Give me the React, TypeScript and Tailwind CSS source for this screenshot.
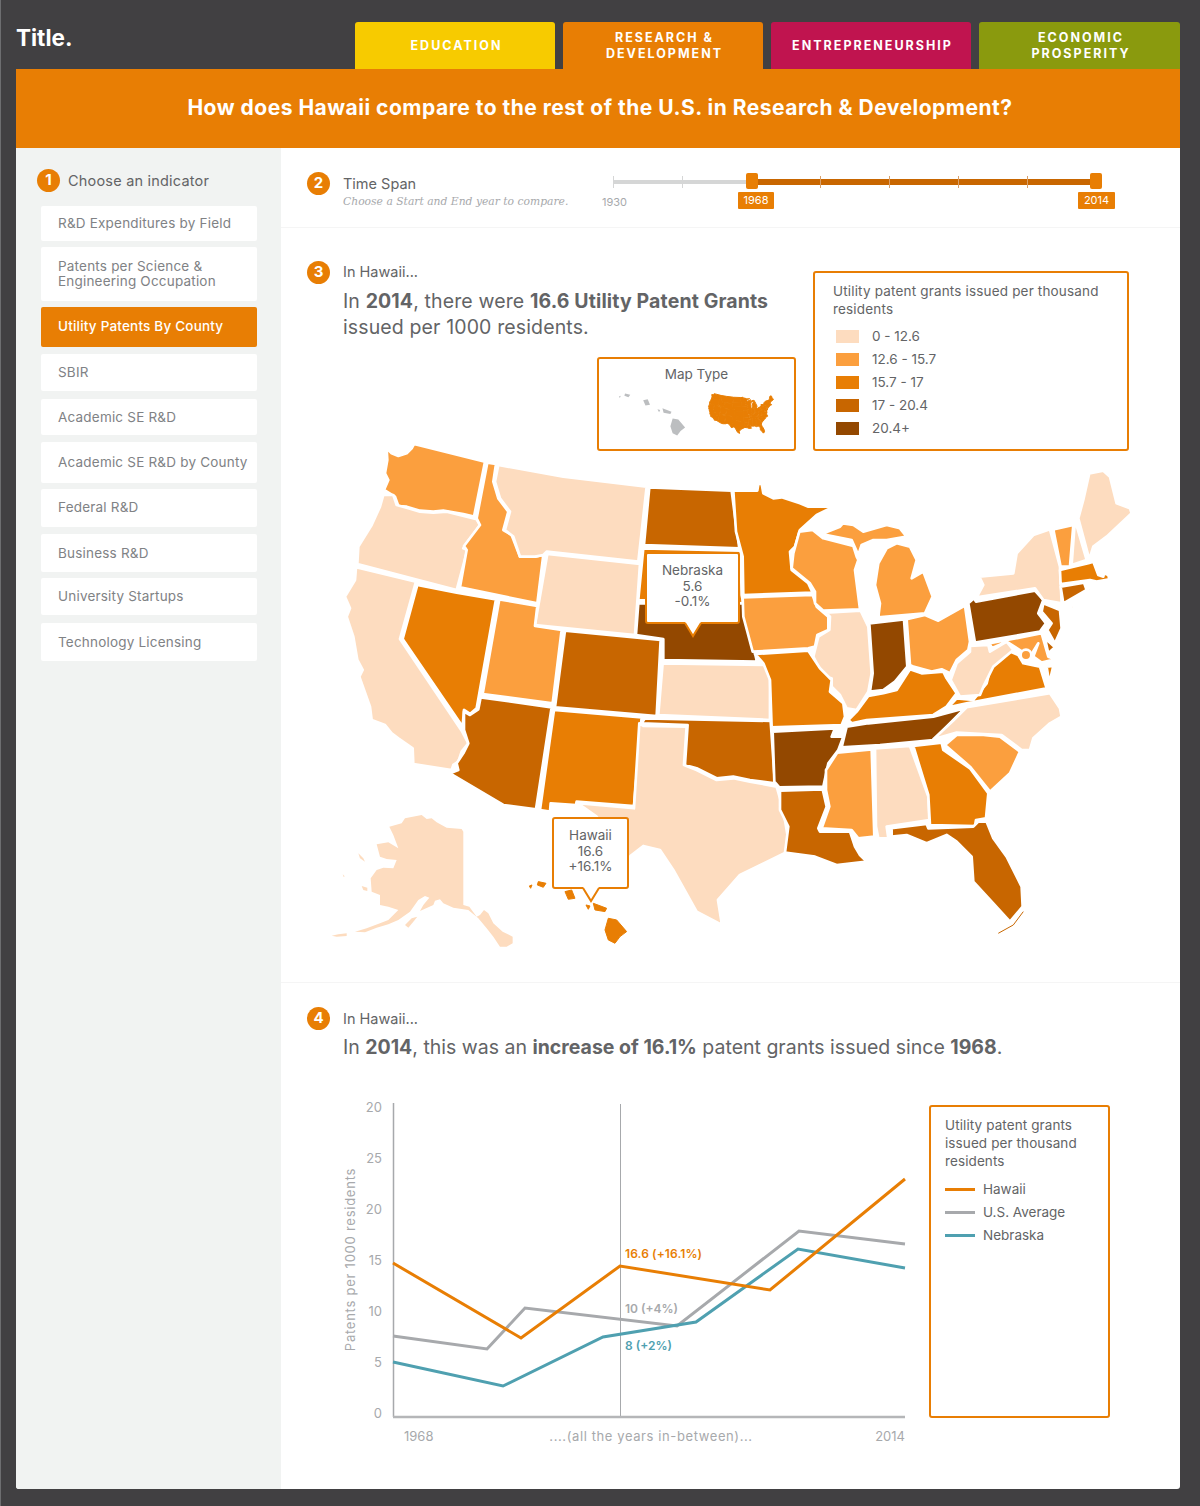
const LIGHT = "#fddcbf";
const MID = "#fb9f3e";
const ORANGE = "#e87e04";
const DARK = "#c86600";
const BROWN = "#934800";

// traced state outlines, west and east halves use their own local coords
const westStates: [string, string][] = [
  [MID, "170,25 185,40 205,48 230,40 245,25 252,12 465,65 432,230 400,222 340,212 310,215 270,212 230,200 205,198 195,170 162,150 175,120 165,100 172,60"],
  [LIGHT, "160,165 190,165 200,195 235,205 270,215 310,218 350,215 440,238 450,255 410,310 400,325 412,330 380,450 265,420 82,372 85,320 125,255 150,200"],
  [MID, "472,68 498,72 490,125 505,175 535,215 520,270 545,285 570,350 615,350 640,345 622,490 390,442 410,330 402,318 450,255 440,235"],
  [LIGHT, "505,75 700,110 950,140 925,365 650,335 640,345 615,350 570,350 550,290 525,270 540,215 510,175 495,125"],
  [DARK, "958,142 1205,152 1215,230 1228,325 942,315"],
  [ORANGE, "940,325 1232,332 1235,465 1240,490 925,480"],
  [BROWN, "925,490 1240,490 1281,665 1000,660 1000,597 918,585"],
  [LIGHT, "652,342 930,372 915,585 615,555"],
  [MID, "508,478 622,498 615,558 695,570 668,790 458,762"],
  [DARK, "705,572 992,600 980,828 675,802"],
  [ORANGE, "262,435 380,458 498,478 448,760 440,805 420,822 402,810 398,860 218,597"],
  [LIGHT, "78,382 258,425 210,597 395,872 415,910 395,935 385,965 370,975 365,990 250,972 248,925 205,895 185,880 165,855 125,840 120,800 88,710 98,690 82,660 70,590 50,530 60,505 45,470 75,420"],
  [DARK, "452,772 665,802 618,1108 520,1095 360,1000 385,990 380,970 400,940 415,910 402,870 402,815 420,825 445,808"],
  [ORANGE, "672,810 935,832 912,1098 740,1085 738,1095 662,1090 660,1115 630,1110"],
  [LIGHT, "998,670 1310,675 1320,690 1320,840 985,825"],
  [DARK, "945,835 1322,843 1335,1030 1260,1020 1210,1010 1160,1015 1100,985 1065,975 1073,855 935,850"],
  [LIGHT, "940,858 1070,860 1062,975 1100,990 1160,1020 1210,1015 1260,1025 1340,1040 1360,1110 1375,1200 1365,1239 1230,1305 1164,1380 1176,1455 1100,1415 1030,1290 990,1230 940,1218 905,1245 890,1260 840,1190 800,1130 750,1095 745,1090 912,1105 928,850"],
];

const eastStates: [string, string][] = [
  [ORANGE, "-20,92 52,92 55,72 65,72 70,100 100,115 125,112 180,130 205,140 270,140 305,128 230,165 180,210 165,260 150,275 155,330 205,370 218,398 10,405 8,290 -12,215"],
  [MID, "8,412 218,405 230,440 265,470 265,510 232,525 225,560 205,565 38,575 10,470"],
  [MID, "178,215 218,210 250,235 340,258 350,290 355,300 345,330 360,448 250,452 225,430 225,395 210,370 155,325 160,280"],
  [MID, "245,222 300,200 330,165 310,190 340,195 370,215 440,195 480,205 500,230 440,240 400,240 365,255 355,285 335,240"],
  [MID, "415,472 420,430 405,375 415,310 440,265 470,250 510,260 530,300 515,355 550,335 578,410 555,460"],
  [LIGHT, "258,458 362,452 385,500 395,640 385,695 350,750 320,745 300,705 275,680 275,655 250,650 220,590 235,530 268,510 270,470"],
  [BROWN, "388,490 492,478 502,620 465,665 430,690 390,695 398,640"],
  [MID, "500,478 555,465 595,482 675,437 690,545 685,570 650,600 630,640 605,628 575,635 520,620 510,615"],
  [ORANGE, "385,708 430,700 470,690 510,628 545,640 610,635 620,655 650,700 620,740 580,765 380,780 335,790 325,780 350,755"],
  [BROWN, "320,800 385,790 580,770 675,745 640,780 580,840 420,855 305,862"],
  [ORANGE, "45,582 205,572 240,625 275,660 270,695 310,730 315,770 305,795 95,802 90,660 70,610"],
  [BROWN, "98,815 285,805 275,830 310,830 295,870 265,910 250,980 118,982 103,965"],
  [DARK, "120,992 248,988 260,1040 235,1105 240,1115 330,1115 345,1160 360,1185 380,1205 290,1215 225,1190 135,1178 145,1100 120,1050"],
  [MID, "292,878 395,868 403,1130 355,1135 335,1110 245,1105 268,1040 258,990 258,930"],
  [LIGHT, "405,865 510,858 565,1010 568,1080 440,1100 445,1135 415,1135 408,1100"],
  [ORANGE, "520,858 605,848 610,870 690,925 745,1000 738,1075 708,1080 705,1098 570,1095 565,1005"],
  [DARK, "455,1105 560,1092 565,1105 700,1100 715,1085 740,1085 760,1135 800,1190 845,1280 848,1340 810,1385 760,1330 700,1265 695,1190 650,1145 620,1125 560,1150 500,1125 455,1130"],
  [MID, "615,855 650,825 730,825 780,830 840,875 810,940 750,995 690,920"],
  [LIGHT, "580,838 640,782 680,742 930,700 960,745 965,770 930,790 880,835 870,870 845,870 785,825 730,822 650,818"],
  [ORANGE, "625,742 650,715 700,720 740,670 750,630 800,570 835,585 850,610 900,620 920,685 680,730"],
  [LIGHT, "690,558 745,555 750,575 800,545 820,570 760,620 730,680 720,705 660,710 632,660 650,610 690,575"],
  [MID, "750,550 905,520 925,590 945,598 905,608 880,590 895,550 870,590 800,545 755,565"],
  [BROWN, "685,430 702,415 708,425 885,392 910,420 895,460 918,490 900,515 705,548"],
  [LIGHT, "718,350 820,340 830,280 880,225 930,208 960,320 965,430 910,420 885,385 710,412 730,375"],
  [DARK, "910,430 960,450 965,505 945,550 922,510 935,490 905,455"],
  [DARK, "915,535 945,562 925,580"],
  [ORANGE, "920,620 940,618 928,670"],
  [MID, "940,208 1000,195 990,320 962,320"],
  [LIGHT, "1005,180 1040,300 995,315"],
  [LIGHT, "1015,175 1030,120 1048,40 1090,32 1110,50 1130,130 1170,145 1175,160 1100,230 1060,260 1048,298"],
  [ORANGE, "960,330 1045,310 1060,305 1075,345 1090,350 1092,340 1105,345 1108,358 1070,365 1050,360 962,372"],
  [DARK, "962,380 1032,368 1040,390 970,430"],
  [BROWN, "1040,368 1055,390 1045,392"],
  [LIGHT, "970,450 1030,420 1000,445"],
];

const alaskaParts = [
  "178,65 215,55 225,40 275,30 290,42 305,40 320,52 350,68 395,72 400,80 400,300 418,305 440,335 450,330 462,315 475,325 490,355 518,380 548,395 548,415 530,425 510,425 490,395 470,370 445,340 415,315 395,312 370,308 340,295 330,283 315,287 310,300 270,318 280,300 298,278 285,273 265,285 240,320 205,345 175,358 140,368 105,382 75,380 110,370 150,355 175,345 205,315 175,305 150,300 150,270 125,260 122,220 140,195 160,188 190,190 200,165 170,162 150,155 140,118 175,112 205,130 190,90",
  "225,360 245,340 262,335 250,350 235,368",
  "85,145 100,160 105,170 90,160",
  "95,243 112,248 112,258 100,255",
  "5,392 25,388 50,385 50,393 20,395",
  "38,208 44,214 41,216",
];
const hawaiiIslands = [
  "835,1435 860,1440 890,1475 870,1490 855,1510 835,1500 825,1470",
  "790,1390 830,1405 825,1415 795,1410",
  "705,1355 725,1350 735,1375 715,1378",
  "625,1325 648,1330 640,1342 622,1335",
  "598,1338 606,1335 602,1345",
  "768,1395 780,1398 775,1408",
];

const indicators = [
  { label: "R&D Expenditures by Field", cls: "h-[35px] pt-px" },
  { label: "Patents per Science & Engineering Occupation", cls: "h-[54px] mt-[6px]" },
  { label: "Utility Patents By County", cls: "h-[40px] mt-[6px]", active: true },
  { label: "SBIR", cls: "h-[37px] mt-[7px] pt-px" },
  { label: "Academic SE R&D", cls: "h-[36px] mt-[8px] pt-px" },
  { label: "Academic SE R&D by County", cls: "h-[41px] mt-[7px]" },
  { label: "Federal R&D", cls: "h-[38px] mt-[6px]" },
  { label: "Business R&D", cls: "h-[38px] mt-[7px] pt-px" },
  { label: "University Startups", cls: "h-[37px] mt-[6px]" },
  { label: "Technology Licensing", cls: "h-[38px] mt-[8px] pt-px" },
];

const mapLegend = [
  { label: "0 - 12.6", color: "bg-[#fddcbf]" },
  { label: "12.6 - 15.7", color: "bg-[#fb9f3e]" },
  { label: "15.7 - 17", color: "bg-[#e87e04]" },
  { label: "17 - 20.4", color: "bg-[#c86600]" },
  { label: "20.4+", color: "bg-[#934800]" },
];

const chartLegend = [
  { label: "Hawaii", color: "bg-[#e87e04]" },
  { label: "U.S. Average", color: "bg-[#a7a9ac]" },
  { label: "Nebraska", color: "bg-[#4fa0b0]" },
];

const yTicks = [["20", 1112], ["25", 1163], ["20", 1214], ["15", 1265], ["10", 1316], ["5", 1367], ["0", 1418]] as const;
const sliderTicks = [0, 69, 139, 207, 276, 345, 414, 483];

const Badge = ({ n }: { n: number }) => (
  <div className="w-[23px] h-[23px] shrink-0 rounded-full bg-[#e87e04] text-white text-[15px] font-bold flex items-center justify-center">
    {n}
  </div>
);

const Tab = ({ color, children }: { color: string; children: React.ReactNode }) => (
  <div className={`h-[47px] pl-[3px] rounded-t-[3px] flex items-center justify-center text-center text-white text-[12.5px] leading-[16px] font-bold tracking-[0.16em] ${color}`}>
    {children}
  </div>
);

const Tooltip = ({ cls, lines }: { cls: string; lines: string[] }) => (
  <div className={`absolute ${cls}`}>
    <div className="h-full pb-[3px] bg-white border-2 border-[#e87e04] rounded-[3px] flex flex-col items-center justify-center text-[13.5px] leading-[15.5px] text-[#636466]">
      {lines.map((l) => <span key={l}>{l}</span>)}
    </div>
    <svg className="absolute left-1/2 -translate-x-1/2 top-[calc(100%-2px)]" width="18" height="16" viewBox="0 0 18 16">
      <polygon points="1,0 9,14 17,0" fill="#fff" />
      <polyline points="1,1 9,14 17,1" fill="none" stroke="#e87e04" strokeWidth="2" />
    </svg>
  </div>
);

const UsMap = () => (
  <svg width="810" height="515" viewBox="330 440 810 515" className="block">
    <g transform="translate(330 805) scale(0.3333)" fill={LIGHT}>
      {alaskaParts.map((p) => <polygon key={p} points={p} />)}
    </g>
    <g transform="translate(330 440) scale(0.3333)" stroke="#fff" strokeWidth="8" strokeLinejoin="round">
      {hawaiiIslands.map((p) => <polygon key={p} points={p} fill={ORANGE} stroke={ORANGE} strokeWidth="3" />)}
      {westStates.map(([c, p]) => <polygon key={p} points={p} fill={c} />)}
    </g>
    <g transform="translate(740 460) scale(0.3333)" stroke="#fff" strokeWidth="8" strokeLinejoin="round">
      {eastStates.map(([c, p]) => <polygon key={p} points={p} fill={c} />)}
      <circle cx="858" cy="585" r="16" fill={MID} />
      <polyline points="850,1355 820,1395 775,1420" fill="none" stroke={DARK} strokeWidth="3" />
    </g>
  </svg>
);

const MiniMaps = () => (
  <svg width="164" height="50" viewBox="0 0 164 50" className="block mx-auto">
    <g transform="translate(-356 -592) scale(0.68)" fill="#bcbec0">
      <g transform="translate(330 440) scale(0.3333)">
        {hawaiiIslands.map((p) => <polygon key={p} points={p} />)}
      </g>
    </g>
    <g transform="translate(65 -29) scale(0.0826)" fill={ORANGE}>
      <g transform="translate(330 440) scale(0.3333)" stroke={ORANGE} strokeWidth="36">
        {westStates.map(([, p]) => <polygon key={p} points={p} />)}
      </g>
      <g transform="translate(740 460) scale(0.3333)" stroke={ORANGE} strokeWidth="36">
        {eastStates.map(([, p]) => <polygon key={p} points={p} />)}
      </g>
    </g>
  </svg>
);

const Chart = () => (
  <svg width="580" height="355" viewBox="330 1095 580 355" className="block shrink-0">
    <line x1="393.5" y1="1103" x2="393.5" y2="1417" stroke="#a7a9ac" strokeWidth="1.5" />
    <line x1="620.5" y1="1104" x2="620.5" y2="1417" stroke="#a7a9ac" strokeWidth="1" />
    <line x1="393" y1="1417" x2="905" y2="1417" stroke="#b5b6b8" strokeWidth="2.5" />
    <polyline points="393,1336 487,1349 525,1308 677,1326 799,1231 905,1244" fill="none" stroke="#a7a9ac" strokeWidth="3" />
    <polyline points="393,1362 503,1386 603,1337 696,1322 798,1249 905,1268" fill="none" stroke="#4fa0b0" strokeWidth="3" />
    <polyline points="393,1263 521,1338 620,1266 770,1290 905,1179" fill="none" stroke="#e87e04" strokeWidth="3" />
    <g fontSize="13" fill="#a7a9ac">
      {yTicks.map(([t, y]) => <text key={y} x="382" y={y} textAnchor="end">{t}</text>)}
      <text x="404" y="1441">1968</text>
      <text x="651" y="1441" textAnchor="middle" letterSpacing="0.6">....(all the years in-between)...</text>
      <text x="905" y="1441" textAnchor="end">2014</text>
      <text transform="translate(355 1259.5) rotate(-90)" textAnchor="middle" letterSpacing="0.75">Patents per 1000 residents</text>
    </g>
    <g fontSize="12" fontWeight="600">
      <text x="625" y="1258" fill="#e87e04" letterSpacing="0.1">16.6 (+16.1%)</text>
      <text x="625" y="1313" fill="#a7a9ac">10 (+4%)</text>
      <text x="625" y="1350" fill="#4fa0b0">8 (+2%)</text>
    </g>
  </svg>
);

const App = () => {
  return (
    <div className="min-h-screen bg-[#414042] border-l border-[#6d6e70] pl-[15px] pr-5 pt-[22px] pb-[17px] font-['Inter',sans-serif]">
      {/* Header */}
      <header className="relative flex h-[47px]">
        <div className="text-white text-[22.5px] font-bold leading-none pt-[5px]">Title.</div>
        <div className="ml-auto grid grid-cols-[200px_200px_200px_201px] gap-x-2">
          <Tab color="bg-[#f7cb00]">EDUCATION</Tab>
          <Tab color="bg-[#e87e04]">RESEARCH &<br />DEVELOPMENT</Tab>
          <Tab color="bg-[#c0144f]">ENTREPRENEURSHIP</Tab>
          <Tab color="bg-[#8a9a0e]">ECONOMIC<br />PROSPERITY</Tab>
        </div>
      </header>

      <div className="bg-white rounded-b-[3px] overflow-hidden">
        <div className="h-[79px] bg-[#e87e04] pl-1 pb-px flex items-center justify-center text-white text-[21px] tracking-[0.5px] font-bold">
          How does Hawaii compare to the rest of the U.S. in Research & Development?
        </div>

        <div className="flex">
          {/* Sidebar */}
          <aside className="w-[265px] shrink-0 bg-[#f1f3f2] pl-[21px] pt-[21px]">
            <div className="flex items-center gap-2 h-[23px] text-[14.5px] tracking-[0.2px] text-[#636466]">
              <Badge n={1} />
              Choose an indicator
            </div>
            <div className="ml-1 mt-[14px] w-[216px] flex flex-col">
              {indicators.map((item) => (
                <div
                  key={item.label}
                  className={`${item.cls} rounded-[2px] flex items-center pl-[17px] pr-2 text-[13.5px] tracking-[0.2px] leading-[15.5px] ${item.active ? "bg-[#e87e04] text-white font-medium" : "bg-white text-[#808285]"}`}
                >
                  {item.label}
                </div>
              ))}
            </div>
          </aside>

          <main className="flex-1 min-w-0">
            {/* Time span */}
            <section className="relative h-[80px] border-b border-[#f5f5f5] pl-[26px] pt-6 flex">
              <Badge n={2} />
              <div className="ml-[13px]">
                <div className="text-[14.5px] leading-[24px] text-[#636466]">Time Span</div>
                <div className="font-['DejaVu_Serif',serif] italic text-[10.75px] leading-[11px] text-[#a7a9ac]">Choose a Start and End year to compare.</div>
              </div>
              <div className="absolute left-[332px] top-[32px] w-[483px] h-1 bg-[#d5d6d6]">
                <div className="absolute left-[139px] right-0 top-[-1px] h-[6px] bg-[#c86600]" />
                {sliderTicks.map((t) => (
                  <div key={t} style={{ left: t }} className={`absolute top-[-4px] w-px h-3 ${t > 139 ? "bg-[#d9a06a]" : "bg-[#d5d6d6]"}`} />
                ))}
                <div className="absolute left-[133px] top-[-7px] w-3 h-4 rounded-[2px] bg-[#e87e04]" />
                <div className="absolute left-[477px] top-[-7px] w-3 h-4 rounded-[2px] bg-[#e87e04]" />
                <div className="absolute left-[-11px] top-[14px] text-[11px] leading-[17px] text-[#a7a9ac]">1930</div>
                <div className="absolute left-[125px] top-[12px] w-[36px] h-[17px] bg-[#e87e04] rounded-[1px] text-white text-[11px] leading-[17px] text-center">1968</div>
                <div className="absolute left-[465px] top-[12px] w-[37px] h-[17px] bg-[#e87e04] rounded-[1px] text-white text-[11px] leading-[17px] text-center">2014</div>
              </div>
            </section>

            {/* Map */}
            <section className="h-[755px] border-b border-[#f5f5f5]">
              <div className="flex pl-[26px] pt-[33px]">
                <div className="w-[489px] flex flex-col">
                  <div className="flex items-center gap-[13px]">
                    <Badge n={3} />
                    <span className="text-[14.5px] leading-[18px] mb-[2px] text-[#636466]">In Hawaii...</span>
                  </div>
                  <p className="ml-9 mt-1 text-[19.5px] leading-[26px] tracking-[0.13px] text-[#636466] w-[450px]">
                    In <b>2014</b>, there were <b>16.6 Utility Patent Grants</b> issued per 1000 residents.
                  </p>
                  <div className="self-end mt-[17px] w-[199px] h-[94px] border-2 border-[#e87e04] rounded-[3px] pt-[6px]">
                    <div className="text-center text-[13.5px] leading-[18px] text-[#636466] mb-[3px]">Map Type</div>
                    <MiniMaps />
                  </div>
                </div>
                <div className="ml-[17px] mt-[10px] w-[316px] h-[180px] border-2 border-[#e87e04] rounded-[3px] pl-[18px] pr-3 pt-[9px] text-[#636466]">
                  <div className="text-[13.5px] tracking-[0.17px] leading-[18px]">Utility patent grants issued per thousand residents</div>
                  <div className="mt-[7px] flex flex-col">
                    {mapLegend.map((l) => (
                      <div key={l.label} className="flex items-center h-[23px] text-[13.5px]">
                        <span className={`ml-[3px] w-[23px] h-[13px] mr-[13px] ${l.color}`} />
                        {l.label}
                      </div>
                    ))}
                  </div>
                </div>
              </div>
              <div className="relative w-[810px] ml-[49px] -mt-[11px]">
                <UsMap />
                <Tooltip cls="left-[315px] top-[112px] w-[95px] h-[72px]" lines={["Nebraska", "5.6", "-0.1%"]} />
                <Tooltip cls="left-[222px] top-[377px] w-[77px] h-[72px]" lines={["Hawaii", "16.6", "+16.1%"]} />
              </div>
            </section>

            {/* Trend */}
            <section className="pl-[26px] pt-6 h-[506px]">
              <div className="flex items-center gap-[13px]">
                <Badge n={4} />
                <span className="text-[14.5px] text-[#636466]">In Hawaii...</span>
              </div>
              <p className="ml-9 mt-1 text-[19.5px] leading-[26px] text-[#636466]">
                In <b>2014</b>, this was an <b>increase of 16.1%</b> patent grants issued since <b>1968</b>.
              </p>
              <div className="flex ml-[23px] mt-[35px]">
                <Chart />
                <div className="ml-[19px] mt-[10px] w-[181px] h-[313px] border-2 border-[#e87e04] rounded-[3px] pl-[14px] pt-[9px] text-[#636466]">
                  <div className="text-[13.5px] tracking-[0.1px] leading-[18px] w-[155px]">Utility patent grants issued per thousand residents</div>
                  <div className="mt-[8px] flex flex-col">
                    {chartLegend.map((l) => (
                      <div key={l.label} className="flex items-center h-[23px] text-[13.5px]">
                        <span className={`w-[30px] h-[2.5px] mr-2 ${l.color}`} />
                        {l.label}
                      </div>
                    ))}
                  </div>
                </div>
              </div>
            </section>
          </main>
        </div>
      </div>
    </div>
  );
};

export default App;
